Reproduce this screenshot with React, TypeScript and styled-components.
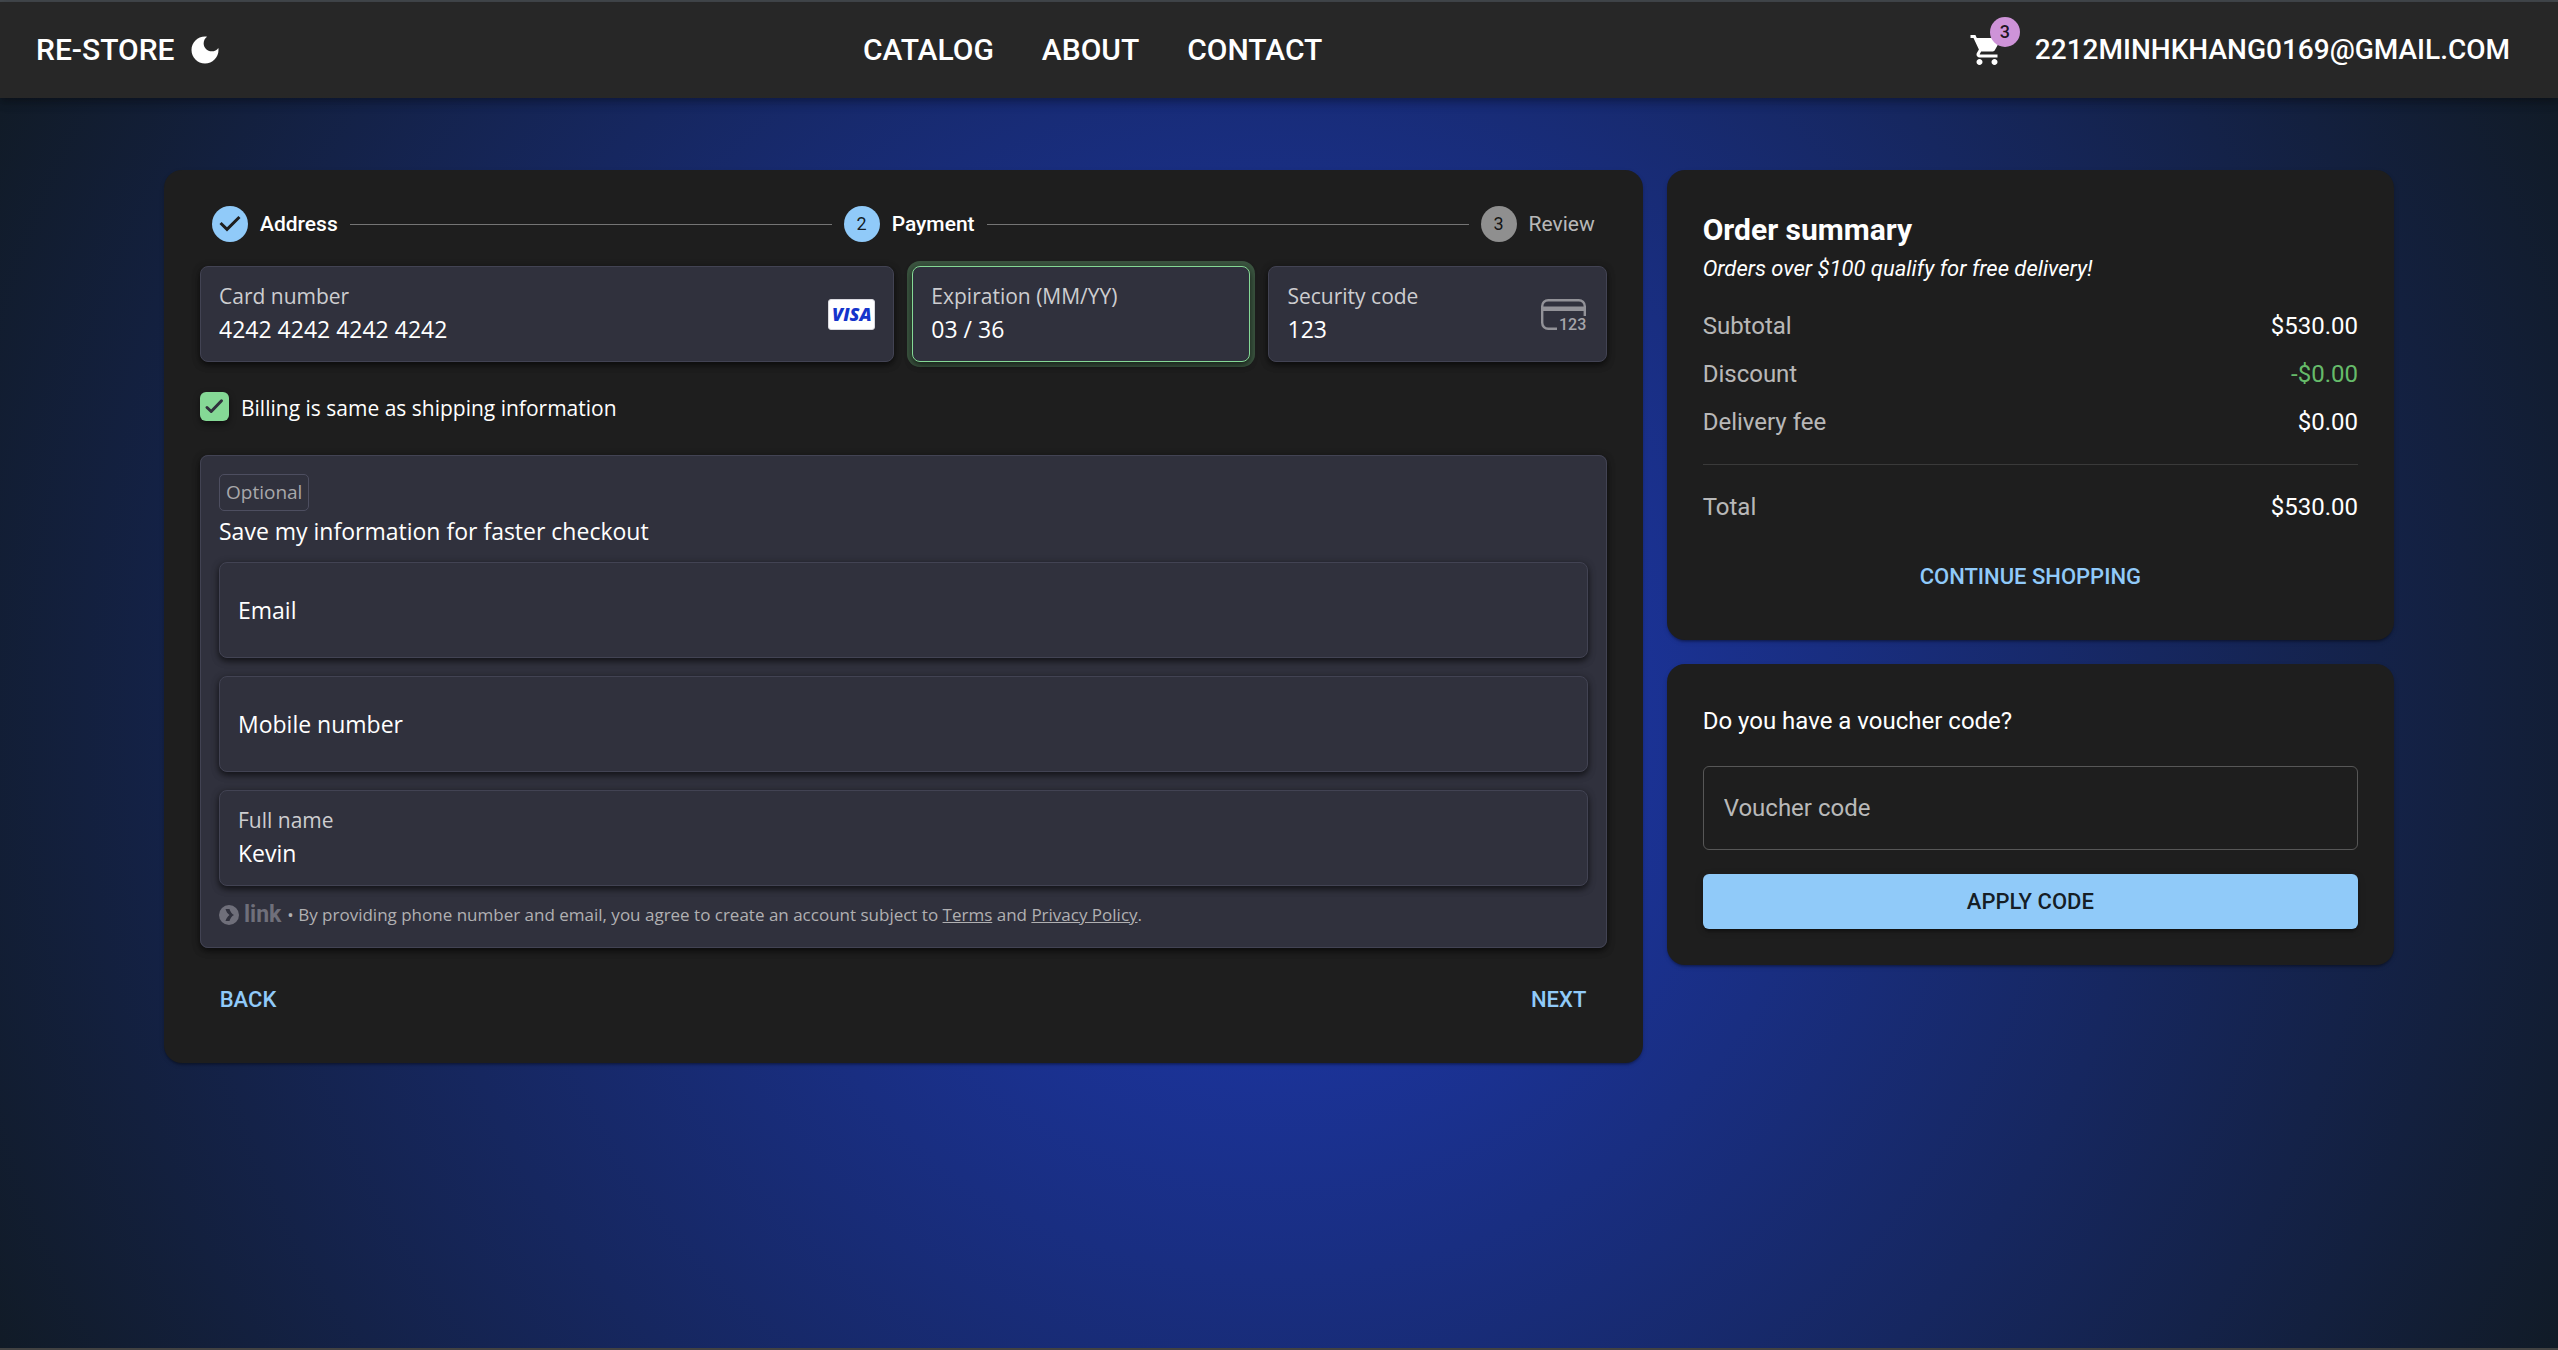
import React, { useId, useState } from 'react';
import styled, { createGlobalStyle, css } from 'styled-components';

const GlobalStyle = createGlobalStyle`
  *, *::before, *::after { box-sizing: border-box; }
  body {
    margin: 0;
    background: #111b27;
    color: #fff;
    font-family: Roboto, 'Liberation Sans', sans-serif;
    font-size: 24px;
    line-height: 36px;
  }
  h1, h2, p, dl, dd, ul, ol, fieldset { margin: 0; padding: 0; border: 0; }
  ul, ol { list-style: none; }
  a { color: inherit; text-decoration: none; }
  button, input { font: inherit; color: inherit; }
`;

const humanist = css`
  font-family: 'Open Sans', 'Noto Sans', sans-serif;
`;

const Page = styled.div`
  display: flex;
  flex-direction: column;
  min-height: 100vh;
  border-top: 2px solid #43484d;
  border-bottom: 2px solid #424242;
`;

const AppBar = styled.header`
  position: relative;
  z-index: 1;
  display: flex;
  align-items: center;
  justify-content: space-between;
  height: 96px;
  padding: 0 36px;
  background: #272727;
  box-shadow: 0 3px 6px -2px rgba(0, 0, 0, 0.2), 0 6px 8px rgba(0, 0, 0, 0.14),
    0 2px 15px rgba(0, 0, 0, 0.12);
`;

const BarGroup = styled.div`
  display: flex;
  align-items: center;
`;

const Brand = styled.a`
  font-size: 30px;
  font-weight: 500;
`;

const NavList = styled.ul`
  display: flex;
  gap: 48px;
  padding: 0 24px;
  font-size: 30px;
  font-weight: 500;
`;

const IconButton = styled.button<{ $pad: number }>`
  display: flex;
  padding: ${(p) => p.$pad}px;
  border: 0;
  border-radius: 50%;
  background: none;
  cursor: pointer;
`;

const BadgeAnchor = styled.span`
  position: relative;
  display: flex;
`;

const Badge = styled.span`
  position: absolute;
  top: -15px;
  right: -15px;
  display: flex;
  align-items: center;
  justify-content: center;
  width: 30px;
  height: 30px;
  border-radius: 50%;
  background: #ce93d8;
  color: rgba(0, 0, 0, 0.87);
  font-size: 18px;
  font-weight: 500;
  line-height: 18px;
`;

const AccountButton = styled.button`
  padding: 9px 12px;
  border: 0;
  background: none;
  font-size: 28px;
  font-weight: 500;
  cursor: pointer;
`;

const Backdrop = styled.main`
  flex: 1;
  padding: 72px 36px;
  background: radial-gradient(circle, #1e3aba, #111b27);
`;

const Columns = styled.div`
  display: grid;
  grid-template-columns: repeat(12, 1fr);
  gap: 24px;
  align-items: start;
  max-width: 2230px;
  margin: 0 auto;
`;

const CheckoutColumn = styled.div`
  grid-column: span 8;
`;

const SideColumn = styled.div`
  grid-column: span 4;
  display: grid;
  gap: 24px;
`;

const Card = styled.section`
  padding: 36px;
  border-radius: 18px;
  background: #1e1e1e;
  box-shadow: 0 3px 2px -2px rgba(0, 0, 0, 0.2), 0 2px 2px rgba(0, 0, 0, 0.14),
    0 2px 5px rgba(0, 0, 0, 0.12);
`;

const Stepper = styled.ol`
  display: flex;
  align-items: center;
  gap: 12px;
  margin-bottom: 24px;
  padding: 0 12px;
`;

const Step = styled.li<{ $reached: boolean }>`
  display: flex;
  align-items: center;
  gap: 12px;
  color: ${(p) => (p.$reached ? '#fff' : 'rgba(255, 255, 255, 0.7)')};
  font-size: 21px;
  font-weight: ${(p) => (p.$reached ? 500 : 400)};
`;

const StepDot = styled.span<{ $reached: boolean }>`
  display: flex;
  align-items: center;
  justify-content: center;
  width: 36px;
  height: 36px;
  border-radius: 50%;
  background: ${(p) => (p.$reached ? '#90caf9' : '#8f8f8f')};
  color: rgba(0, 0, 0, 0.87);
  font-size: 18px;
  font-weight: 400;
`;

const StepLine = styled.li`
  flex: 1;
  height: 1px;
  background: #757575;
`;

const CardFields = styled.div`
  display: grid;
  grid-template-columns: repeat(4, 1fr);
  gap: 18px;
  > :first-child { grid-column: span 2; }
`;

const raised = css`
  border: 1px solid #424353;
  border-radius: 8px;
  background: #30313d;
  box-shadow: 0 3px 6px rgba(0, 0, 0, 0.5), 0 2px 9px rgba(0, 0, 0, 0.25);
`;

const FieldBox = styled.div<{ $focused?: boolean }>`
  ${humanist}
  ${raised}
  display: flex;
  align-items: center;
  justify-content: space-between;
  height: 96px;
  padding: 0 18px;
  ${(p) =>
    p.$focused &&
    css`
      border-color: #85d996;
      box-shadow: 0 3px 6px rgba(0, 0, 0, 0.5), 0 2px 9px rgba(0, 0, 0, 0.25),
        0 0 0 5px rgba(133, 217, 150, 0.3);
    `}
`;

const FieldStack = styled.div`
  display: flex;
  flex: 1;
  flex-direction: column;
  min-width: 0;
`;

const FieldLabel = styled.label`
  color: #cdcdd0;
  font-size: 21px;
  line-height: 30px;
`;

const FieldInput = styled.input`
  width: 100%;
  height: 36px;
  padding: 0;
  border: 0;
  outline: 0;
  background: none;
  color: #fff;
  font-size: 23px;
  &::placeholder { color: #fff; opacity: 1; }
`;

const VisaMark = styled.span`
  display: flex;
  align-items: center;
  justify-content: center;
  width: 47px;
  height: 31px;
  border: 1px solid #d9d9df;
  border-radius: 3px;
  background: #fff;
  color: #1434cb;
  font-size: 18px;
  font-style: italic;
  font-weight: 800;
  line-height: 18px;
`;

const BillingRow = styled.label`
  ${humanist}
  display: flex;
  align-items: flex-start;
  gap: 12px;
  width: fit-content;
  margin: 30px 0;
  font-size: 21px;
  line-height: 33px;
`;

const Tick = styled.span`
  display: grid;
  width: 29px;
  height: 29px;
  border-radius: 6px;
  background: #85d996;
  box-shadow: 0 3px 6px rgba(0, 0, 0, 0.5);
  > * { grid-area: 1 / 1; }
`;

const TickInput = styled.input`
  width: 29px;
  height: 29px;
  margin: 0;
  appearance: none;
`;

const SavePanel = styled.fieldset`
  ${humanist}
  && {
    ${raised}
    display: flex;
    flex-direction: column;
    padding: 18px;
  }
`;

const PanelHead = styled.div`
  display: flex;
  flex-direction: column;
  align-items: flex-start;
  gap: 4px;
`;

const PanelFields = styled.div`
  display: grid;
  gap: 18px;
  margin: 15px 0;
`;

const OptionalTag = styled.span`
  padding: 0 6px;
  border: 1px solid #4d4e60;
  border-radius: 5px;
  color: #a8a8ab;
  font-size: 19px;
  line-height: 35px;
`;

const PanelTitle = styled.p`
  font-size: 23px;
  line-height: 32px;
`;

const LegalRow = styled.div`
  display: flex;
  align-items: center;
  gap: 6px;
  color: #b0b0b2;
  font-size: 17px;
  line-height: 28px;
  a { text-decoration: underline; }
`;

const LinkBrand = styled.span`
  display: flex;
  align-items: center;
  gap: 5px;
  color: #6f6f7a;
  font-family: Roboto, sans-serif;
  font-size: 23px;
  font-weight: 700;
  line-height: 24px;
`;

const Actions = styled.div`
  display: flex;
  justify-content: space-between;
  margin-top: 24px;
`;

const TextButton = styled.button`
  min-width: 96px;
  padding: 9px 12px;
  border: 0;
  border-radius: 6px;
  background: none;
  color: #90caf9;
  font-size: 22px;
  font-weight: 500;
  line-height: 37px;
  text-align: center;
  cursor: pointer;
`;

const WideButton = styled(TextButton)<{ $filled?: boolean }>`
  display: block;
  width: 100%;
  ${(p) =>
    p.$filled &&
    css`
      background: #90caf9;
      color: rgba(0, 0, 0, 0.87);
      box-shadow: 0 5px 2px -3px rgba(0, 0, 0, 0.2), 0 3px 3px rgba(0, 0, 0, 0.14),
        0 2px 8px rgba(0, 0, 0, 0.12);
    `}
`;

const SummaryLink = styled(WideButton)`
  margin-top: 24px;
`;

const SummaryTitle = styled.h2`
  font-size: 30px;
  font-weight: 700;
  line-height: 48px;
`;

const SummaryNote = styled.p`
  margin-bottom: 24px;
  font-size: 22px;
  font-style: italic;
  line-height: 30px;
`;

const SummaryRow = styled.dl`
  display: flex;
  justify-content: space-between;
  margin-bottom: 12px;
`;

const Term = styled.dt`
  color: rgba(255, 255, 255, 0.7);
`;

const Amount = styled.dd<{ $discount?: boolean }>`
  color: ${(p) => (p.$discount ? '#66bb6a' : '#fff')};
`;

const Divider = styled.hr`
  height: 1px;
  margin: 24px 0;
  border: 0;
  background: #3a3a3a;
`;

const VoucherForm = styled.form`
  display: grid;
  gap: 24px;
`;

const VoucherLabel = styled.label`
  line-height: 42px;
`;

const VoucherInput = styled.input`
  width: 100%;
  height: 84px;
  padding: 0 20px;
  border: 1px solid #575757;
  border-radius: 6px;
  outline: 0;
  background: none;
  &::placeholder { color: #b9b9b9; opacity: 1; }
`;

const MoonIcon = () => (
  <svg width="36" height="36" viewBox="0 0 24 24" fill="#fff" aria-hidden="true">
    <path d="M12 3c-4.97 0-9 4.03-9 9s4.03 9 9 9 9-4.03 9-9c0-.46-.04-.92-.1-1.36-.98 1.37-2.58 2.26-4.4 2.26-2.98 0-5.4-2.42-5.4-5.4 0-1.81.89-3.42 2.26-4.4-.44-.06-.9-.1-1.36-.1z" />
  </svg>
);

const CartIcon = () => (
  <svg width="36" height="36" viewBox="0 0 24 24" fill="#fff" aria-hidden="true">
    <path d="M7 18c-1.1 0-1.99.9-1.99 2S5.9 22 7 22s2-.9 2-2-.9-2-2-2zM1 2v2h2l3.6 7.59-1.35 2.45c-.16.28-.25.61-.25.96 0 1.1.9 2 2 2h12v-2H7.42c-.14 0-.25-.11-.25-.25l.03-.12.9-1.63h7.45c.75 0 1.41-.41 1.75-1.03l3.58-6.49c.08-.14.12-.31.12-.48 0-.55-.45-1-1-1H5.21l-.94-2H1zm16 16c-1.1 0-1.99.9-1.99 2s.89 2 1.99 2 2-.9 2-2-.9-2-2-2z" />
  </svg>
);

const DoneIcon = () => (
  <svg width="36" height="36" viewBox="0 0 24 24" aria-hidden="true">
    <path fill="#1e1e1e" d="M10 17l-5-5 1.4-1.4 3.6 3.6 7.6-7.6L19 8l-9 9z" />
  </svg>
);

const TickIcon = () => (
  <svg width="29" height="29" viewBox="0 0 29 29" aria-hidden="true">
    <path
      d="M7 15.5l4.2 4L21.5 8.8"
      fill="none"
      stroke="#30313d"
      strokeWidth="3"
      strokeLinecap="round"
      strokeLinejoin="round"
    />
  </svg>
);

const CvcIcon = () => (
  <svg width="47" height="43" viewBox="0 -6 47 43" aria-hidden="true">
    <path
      d="M16 29.800H7.200a6 6 0 0 1-6-6V7.200a6 6 0 0 1 6-6h30.600a6 6 0 0 1 6 6V17"
      fill="none"
      stroke="#929298"
      strokeWidth="2.400"
    />
    <path d="M1 7.500h43V12H1z" fill="#929298" />
    <text x="18" y="31" fill="#a5a5aa" fontSize="16" fontWeight="500" fontFamily="Roboto, sans-serif">
      123
    </text>
  </svg>
);

const LinkIcon = () => (
  <svg width="20" height="20" viewBox="0 0 20 20" aria-hidden="true">
    <circle cx="10" cy="10" r="10" fill="#6f6f7a" />
    <path
      d="M6.500 4h4c.7 2.600 2.200 4.700 4.500 6-2.300 1.300-3.800 3.400-4.500 6h-4c.7-2.500 2-4.500 4-6-2-1.500-3.300-3.500-4-6z"
      fill="#30313d"
    />
  </svg>
);

type FieldProps = {
  label: string;
  value?: string;
  focused?: boolean;
  children?: React.ReactNode;
};

function Field({ label, value = '', focused, children }: FieldProps) {
  const id = useId();
  const [text, setText] = useState(value);
  const floating = text !== '';
  return (
    <FieldBox $focused={focused}>
      <FieldStack>
        {floating && <FieldLabel htmlFor={id}>{label}</FieldLabel>}
        <FieldInput
          id={id}
          aria-label={label}
          placeholder={label}
          value={text}
          onChange={(e) => setText(e.target.value)}
        />
      </FieldStack>
      {children}
    </FieldBox>
  );
}

const rows = [
  { term: 'Subtotal', amount: '$530.00' },
  { term: 'Discount', amount: '-$0.00', discount: true },
  { term: 'Delivery fee', amount: '$0.00' },
];

export default function App() {
  return (
    <Page>
      <GlobalStyle />
      <AppBar>
        <BarGroup>
          <Brand href="#home">RE-STORE</Brand>
          <IconButton type="button" $pad={12} aria-label="Toggle dark mode">
            <MoonIcon />
          </IconButton>
        </BarGroup>
        <nav>
          <NavList>
            {['CATALOG', 'ABOUT', 'CONTACT'].map((name) => (
              <li key={name}>
                <a href={`#${name.toLowerCase()}`}>{name}</a>
              </li>
            ))}
          </NavList>
        </nav>
        <BarGroup>
          <IconButton type="button" $pad={18} aria-label="Shopping cart">
            <BadgeAnchor>
              <CartIcon />
              <Badge>3</Badge>
            </BadgeAnchor>
          </IconButton>
          <AccountButton type="button">2212MINHKHANG0169@GMAIL.COM</AccountButton>
        </BarGroup>
      </AppBar>

      <Backdrop>
        <Columns>
          <CheckoutColumn>
            <Card>
              <Stepper>
                <Step $reached>
                  <StepDot $reached>
                    <DoneIcon />
                  </StepDot>
                  Address
                </Step>
                <StepLine aria-hidden="true" />
                <Step $reached>
                  <StepDot $reached>2</StepDot>
                  Payment
                </Step>
                <StepLine aria-hidden="true" />
                <Step $reached={false}>
                  <StepDot $reached={false}>3</StepDot>
                  Review
                </Step>
              </Stepper>

              <CardFields>
                <Field label="Card number" value="4242 4242 4242 4242">
                  <VisaMark>VISA</VisaMark>
                </Field>
                <Field label="Expiration (MM/YY)" value="03 / 36" focused />
                <Field label="Security code" value="123">
                  <CvcIcon />
                </Field>
              </CardFields>

              <BillingRow>
                <Tick>
                  <TickInput type="checkbox" defaultChecked />
                  <TickIcon />
                </Tick>
                Billing is same as shipping information
              </BillingRow>

              <SavePanel>
                <PanelHead>
                  <OptionalTag>Optional</OptionalTag>
                  <PanelTitle>Save my information for faster checkout</PanelTitle>
                </PanelHead>
                <PanelFields>
                  <Field label="Email" />
                  <Field label="Mobile number" />
                  <Field label="Full name" value="Kevin" />
                </PanelFields>
                <LegalRow>
                  <LinkBrand>
                    <LinkIcon />
                    link
                  </LinkBrand>
                  <p>
                    • By providing phone number and email, you agree to create an account subject to{' '}
                    <a href="#terms">Terms</a> and <a href="#privacy">Privacy Policy</a>.
                  </p>
                </LegalRow>
              </SavePanel>

              <Actions>
                <TextButton type="button">BACK</TextButton>
                <TextButton type="button">NEXT</TextButton>
              </Actions>
            </Card>
          </CheckoutColumn>

          <SideColumn>
            <Card>
              <SummaryTitle>Order summary</SummaryTitle>
              <SummaryNote>Orders over $100 qualify for free delivery!</SummaryNote>
              {rows.map((row) => (
                <SummaryRow key={row.term}>
                  <Term>{row.term}</Term>
                  <Amount $discount={row.discount}>{row.amount}</Amount>
                </SummaryRow>
              ))}
              <Divider />
              <SummaryRow>
                <Term>Total</Term>
                <Amount>$530.00</Amount>
              </SummaryRow>
              <SummaryLink as="a" href="#catalog">
                CONTINUE SHOPPING
              </SummaryLink>
            </Card>

            <Card>
              <VoucherForm onSubmit={(e) => e.preventDefault()}>
                <VoucherLabel htmlFor="voucher">Do you have a voucher code?</VoucherLabel>
                <VoucherInput id="voucher" placeholder="Voucher code" />
                <WideButton type="submit" $filled>
                  APPLY CODE
                </WideButton>
              </VoucherForm>
            </Card>
          </SideColumn>
        </Columns>
      </Backdrop>
    </Page>
  );
}
